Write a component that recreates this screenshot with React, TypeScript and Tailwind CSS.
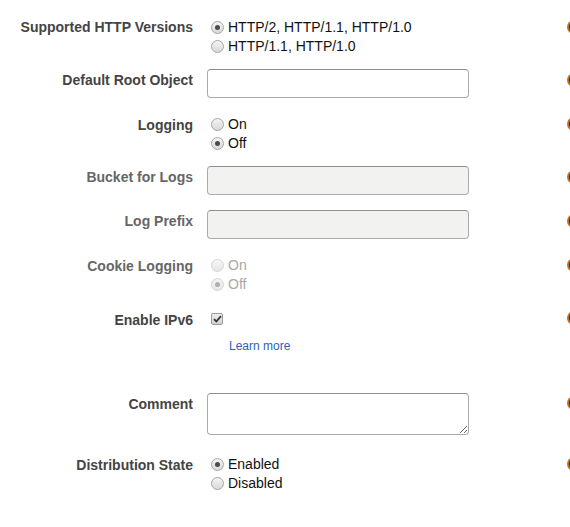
import type { ReactNode } from "react";

type Opt = { label: string; checked?: boolean };

function Radio({ checked, disabled }: { checked?: boolean; disabled?: boolean }) {
  return (
    <span
      className={`relative mr-[4px] inline-flex h-[13px] w-[13px] shrink-0 items-center justify-center rounded-full border ${
        disabled
          ? "border-[#d4d4d4] bg-gradient-to-b from-[#f6f6f6] to-[#e6e6e6]"
          : "border-[#a6a6a6] bg-gradient-to-b from-[#f4f4f4] to-[#d9d9d9]"
      }`}
    >
      {checked && (
        <span className={`h-[5px] w-[5px] rounded-full ${disabled ? "bg-[#b0b0b0]" : "bg-[#4a4a4a]"}`} />
      )}
    </span>
  );
}

function RadioGroup({ options, disabled }: { options: Opt[]; disabled?: boolean }) {
  return (
    <div className="pl-[4px] pt-[1px]">
      {options.map((o) => (
        <div key={o.label} className="flex h-[19px] items-center">
          <Radio checked={o.checked} disabled={disabled} />
          <span className={`text-[14px] ${disabled ? "text-[#a8a8a8]" : "text-[#111]"}`}>{o.label}</span>
        </div>
      ))}
    </div>
  );
}

function InfoDot() {
  return <span className="block h-[14px] w-[14px] rounded-full border-2 border-[#b8702a] bg-[#2e1e0e]" />;
}

function Row({
  label,
  muted,
  labelPad = "pt-[2px]",
  className = "",
  iconPad = "pt-[3px]",
  children,
}: {
  label?: string;
  muted?: boolean;
  labelPad?: string;
  className?: string;
  iconPad?: string;
  children: ReactNode;
}) {
  return (
    <div className={`flex ${className}`}>
      <div
        className={`w-[193px] shrink-0 text-right text-[14px] font-bold leading-[19px] ${labelPad} ${
          muted ? "text-[#666]" : "text-[#444]"
        }`}
      >
        {label}
      </div>
      <div className="ml-[14px] w-[360px] shrink-0">{children}</div>
      <div className={`shrink-0 ${iconPad}`}>{label && <InfoDot />}</div>
    </div>
  );
}

const textBox = "block h-[29px] w-[262px] rounded-[4px] border border-[#aaa] border-t-[#8f8f8f]";

export default function App() {
  return (
    <div
      className="h-[527px] w-[570px] overflow-hidden bg-white pt-[17px]"
      style={{ fontFamily: '"Liberation Sans", Arial, sans-serif' }}
    >
      <Row label="Supported HTTP Versions" labelPad="pt-[1px]">
        <RadioGroup
          options={[{ label: "HTTP/2, HTTP/1.1, HTTP/1.0", checked: true }, { label: "HTTP/1.1, HTTP/1.0" }]}
        />
      </Row>

      <Row label="Default Root Object" className="mt-[13px]" iconPad="pt-[4px]">
        <input type="text" className={`${textBox} bg-white`} />
      </Row>

      <Row label="Logging" className="mt-[16px]">
        <RadioGroup options={[{ label: "On" }, { label: "Off", checked: true }]} />
      </Row>

      <Row label="Bucket for Logs" muted className="mt-[13px]" iconPad="pt-[4px]">
        <input type="text" disabled className={`${textBox} bg-[#f2f2f0]`} />
      </Row>

      <Row label="Log Prefix" muted className="mt-[15px]" iconPad="pt-[4px]">
        <input type="text" disabled className={`${textBox} bg-[#f2f2f0]`} />
      </Row>

      <Row label="Cookie Logging" muted className="mt-[16px]">
        <RadioGroup disabled options={[{ label: "On" }, { label: "Off", checked: true }]} />
      </Row>

      <Row label="Enable IPv6" className="mt-[15px]" iconPad="pt-[2px]">
        <div className="flex h-[19px] items-center pl-[4px] pt-[1px]">
          <span className="flex h-[12px] w-[12px] items-center justify-center rounded-[2px] border border-[#9a9a9a] bg-gradient-to-b from-[#eee] to-[#d2d2d2]">
            <svg width="9" height="8" viewBox="0 0 9 8">
              <path d="M1 4.2 L3.3 6.5 L8 1.2" fill="none" stroke="#333" strokeWidth="1.8" />
            </svg>
          </span>
        </div>
        <div className="mt-[9px] pl-[22px] text-[12px] leading-[18px] text-[#2d5fb5]">Learn more</div>
      </Row>

      <Row label="Comment" className="mt-[38px]" iconPad="pt-[3px]">
        <textarea className="block h-[42px] w-[262px] rounded-[4px] border border-[#aaa] border-t-[#8f8f8f] bg-white" />
      </Row>

      <Row label="Distribution State" className="mt-[19px]">
        <RadioGroup options={[{ label: "Enabled", checked: true }, { label: "Disabled" }]} />
      </Row>
    </div>
  );
}
